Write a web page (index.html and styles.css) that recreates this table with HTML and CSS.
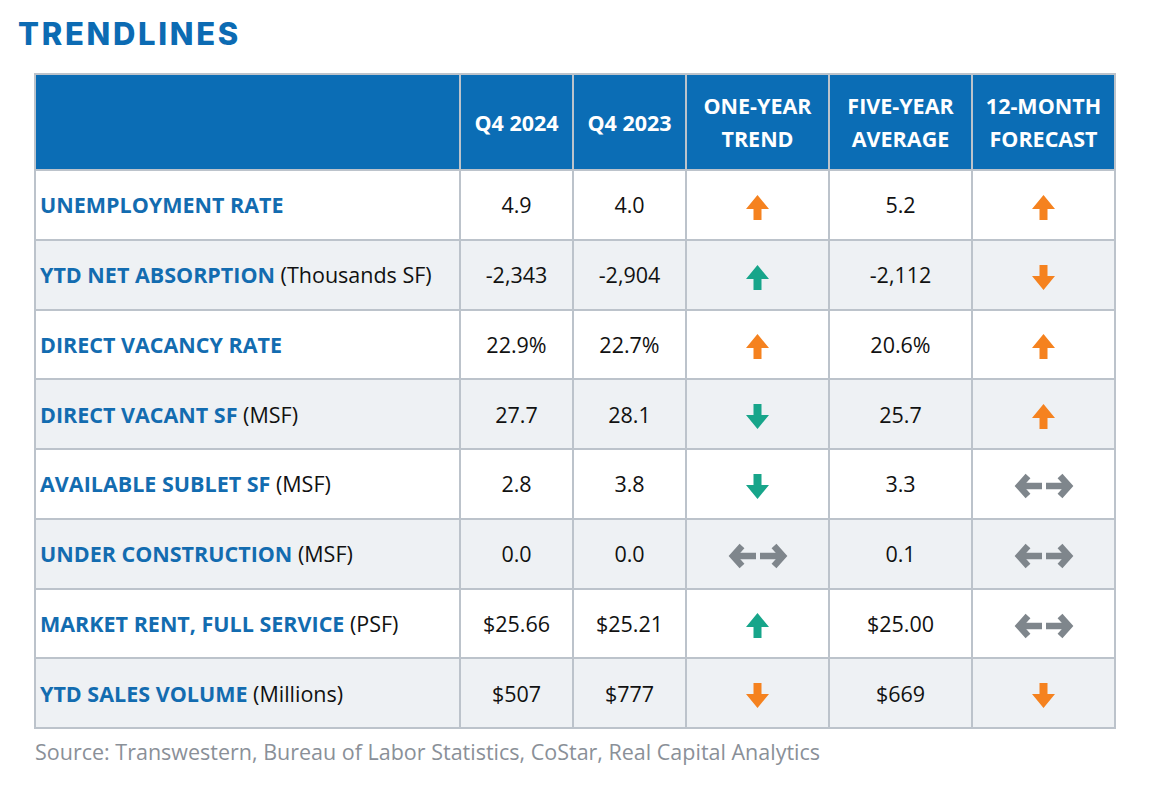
FILE: index.html
```html
<!DOCTYPE html>
<html>
<head>
<meta charset="utf-8">
<link rel="stylesheet" href="styles.css">
</head>
<body>
<svg width="0" height="0" class="defs">
  <defs>
    <symbol id="up" viewBox="0 0 23 25"><path d="M11.5 0 L23 14 L15.5 14 L15.5 25 L7.5 25 L7.5 14 L0 14 Z"/></symbol>
    <symbol id="down" viewBox="0 0 23 25"><path d="M11.5 25 L23 11 L15.5 11 L15.5 0 L7.5 0 L7.5 11 L0 11 Z"/></symbol>
    <symbol id="lr" viewBox="0 0 60 26">
      <g fill="none" stroke-width="6.5" stroke-linejoin="miter" stroke-linecap="butt">
        <polyline points="14,3 5,13 14,23"/>
        <line x1="6" y1="13" x2="28" y2="13"/>
        <polyline points="46,3 55,13 46,23"/>
        <line x1="32" y1="13" x2="54" y2="13"/>
      </g>
    </symbol>
  </defs>
</svg>
<div class="page">
  <h1 class="title">TRENDLINES</h1>
  <table class="trend">
    <colgroup>
      <col class="c-label"><col class="c-q"><col class="c-q"><col class="c-t"><col class="c-t"><col class="c-t">
    </colgroup>
    <thead>
      <tr>
        <th></th>
        <th>Q4 2024</th>
        <th>Q4 2023</th>
        <th>ONE-YEAR<br>TREND</th>
        <th>FIVE-YEAR<br>AVERAGE</th>
        <th>12-MONTH<br>FORECAST</th>
      </tr>
    </thead>
    <tbody>
      <tr>
        <td class="label"><b>UNEMPLOYMENT RATE</b></td>
        <td>4.9</td><td>4.0</td>
        <td><svg class="ar orange"><use href="#up"/></svg></td>
        <td>5.2</td>
        <td><svg class="ar orange"><use href="#up"/></svg></td>
      </tr>
      <tr>
        <td class="label"><b>YTD NET ABSORPTION</b> (Thousands SF)</td>
        <td>-2,343</td><td>-2,904</td>
        <td><svg class="ar teal"><use href="#up"/></svg></td>
        <td>-2,112</td>
        <td><svg class="ar orange"><use href="#down"/></svg></td>
      </tr>
      <tr>
        <td class="label"><b>DIRECT VACANCY RATE</b></td>
        <td>22.9%</td><td>22.7%</td>
        <td><svg class="ar orange"><use href="#up"/></svg></td>
        <td>20.6%</td>
        <td><svg class="ar orange"><use href="#up"/></svg></td>
      </tr>
      <tr>
        <td class="label"><b>DIRECT VACANT SF</b> (MSF)</td>
        <td>27.7</td><td>28.1</td>
        <td><svg class="ar teal"><use href="#down"/></svg></td>
        <td>25.7</td>
        <td><svg class="ar orange"><use href="#up"/></svg></td>
      </tr>
      <tr>
        <td class="label"><b>AVAILABLE SUBLET SF</b> (MSF)</td>
        <td>2.8</td><td>3.8</td>
        <td><svg class="ar teal"><use href="#down"/></svg></td>
        <td>3.3</td>
        <td><svg class="lr grey"><use href="#lr"/></svg></td>
      </tr>
      <tr>
        <td class="label"><b>UNDER CONSTRUCTION</b> (MSF)</td>
        <td>0.0</td><td>0.0</td>
        <td><svg class="lr grey"><use href="#lr"/></svg></td>
        <td>0.1</td>
        <td><svg class="lr grey"><use href="#lr"/></svg></td>
      </tr>
      <tr>
        <td class="label"><b>MARKET RENT, FULL SERVICE</b> (PSF)</td>
        <td>$25.66</td><td>$25.21</td>
        <td><svg class="ar teal"><use href="#up"/></svg></td>
        <td>$25.00</td>
        <td><svg class="lr grey"><use href="#lr"/></svg></td>
      </tr>
      <tr>
        <td class="label"><b>YTD SALES VOLUME</b> (Millions)</td>
        <td>$507</td><td>$777</td>
        <td><svg class="ar orange"><use href="#down"/></svg></td>
        <td>$669</td>
        <td><svg class="ar orange"><use href="#down"/></svg></td>
      </tr>
    </tbody>
  </table>
  <p class="source">Source: Transwestern, Bureau of Labor Statistics, CoStar, Real Capital Analytics</p>
</div>
</body>
</html>
```
FILE: styles.css
```css
html, body { margin: 0; padding: 0; background: #ffffff; }
.defs { position: absolute; width: 0; height: 0; overflow: hidden; }
.page { padding: 15px 0 0 18px; font-family: "Open Sans", "DejaVu Sans", sans-serif; }
.title {
  margin: 0 0 21px 0;
  font-family: "Inter", "Open Sans", sans-serif;
  font-weight: 800;
  font-size: 31px;
  line-height: 37px;
  letter-spacing: 2.7px;
  color: #0c6bb3;
}
.trend {
  margin-left: 16px;
  width: 1082px;
  border-collapse: collapse;
  table-layout: fixed;
  border: 2px solid #bcc3cb;
}
.c-label { width: 425px; }
.c-q { width: 113px; }
.c-t { width: 143px; }
.trend th, .trend td { border: 2px solid #bcc3cb; padding: 0; text-align: center; }
.trend thead th {
  background: #0b6db5;
  color: #ffffff;
  font-weight: 700;
  font-size: 21.5px;
  line-height: 33px;
  height: 94px;
}
.trend tbody td {
  height: 67.75px;
  font-size: 21.5px;
  color: #111;
}
.trend tbody tr:nth-child(even) td { background: #eef1f4; }
.trend td.label { text-align: left; padding-left: 4px; color: #111; }
.trend td.label b { color: #136cb0; font-weight: 700; }
.ar { width: 23px; height: 25px; vertical-align: middle; }
.lr { width: 60px; height: 26px; vertical-align: middle; }
.orange { fill: #f5821f; }
.teal { fill: #17a58a; }
.grey { stroke: #7f868c; }
.source {
  margin: 8px 0 0 17px;
  font-size: 21.5px;
  color: #8a9098;
}
```
